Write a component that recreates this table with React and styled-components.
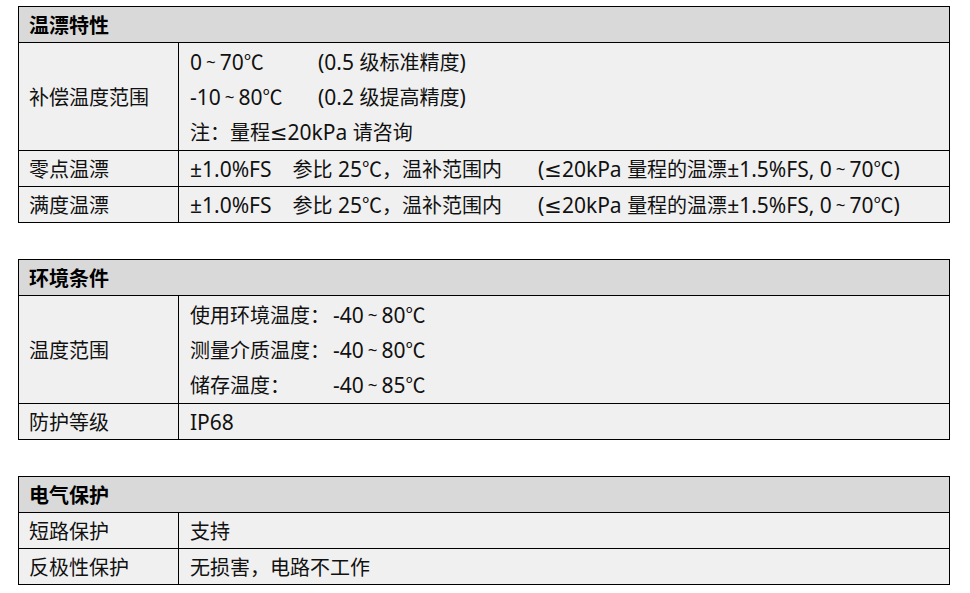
import React from "react";
import styled, { createGlobalStyle } from "styled-components";

const Global = createGlobalStyle`
  html, body { margin: 0; padding: 0; background: #ffffff; }
  body {
    font-family: "Noto Sans", "DejaVu Sans", "Noto Sans CJK SC", sans-serif;
    color: #111111;
  }
`;

const Page = styled.div`
  display: flex;
  flex-direction: column;
  gap: 36px;
  padding: 6px 0 0 18px;
`;

const Table = styled.section`
  width: 932px;
  box-sizing: border-box;
  border: 1px solid #000;
  background: #f0f0f0;
  font-size: 21px;
`;

const Header = styled.div`
  height: 35px;
  line-height: 35px;
  padding: 0 10px;
  background: #d9d9d9;
  border-bottom: 1px solid #000;
  font-weight: 700;
  color: #000;
`;

const Row = styled.div`
  display: grid;
  grid-template-columns: 160px 1fr;
  & + & { border-top: 1px solid #000; }
`;

const Label = styled.div`
  display: flex;
  align-items: center;
  padding: 0 10px;
  border-right: 1px solid #000;
  line-height: 35px;
  white-space: nowrap;
`;

const Value = styled.div`
  display: flex;
  flex-direction: column;
  justify-content: center;
  padding: ${(p) => (p.$multi ? "1px 11px" : "0 11px")};
`;

const Line = styled.div`
  display: flex;
  align-items: center;
  height: 35px;
  white-space: pre;
`;

const Key = styled.span`
  display: inline-block;
  width: ${(p) => p.$w}px;
  flex: none;
`;

const Seg = styled.span`
  margin-left: ${(p) => p.$gap || 0}px;
`;

const Han = styled.span`
  font-family: "Noto Sans CJK SC", sans-serif;
  font-size: 20px;
`;

const Tilde = styled.span`
  display: inline-block;
  font-size: 17px;
  margin: 0 4px;
  vertical-align: 2px;
`;

function Text({ children }) {
  const parts = String(children).split(/([\u3000-\u9fff\uff00-\uff5d\uff5f-\uffef℃]+|～)/);
  return parts.map((p, i) => {
    if (!p) return null;
    if (p === "～") return <Tilde key={i}>~</Tilde>;
    if (/[\u3000-\u9fff\uff00-\uffef℃]/.test(p)) return <Han key={i}>{p}</Han>;
    return <React.Fragment key={i}>{p}</React.Fragment>;
  });
}

const sections = [
  {
    title: "温漂特性",
    rows: [
      {
        label: "补偿温度范围",
        lines: [
          { key: "0～70℃", val: "(0.5 级标准精度)", w: 128 },
          { key: "-10～80℃", val: "(0.2 级提高精度)", w: 128 },
          { segs: [["注：量程≤20kPa 请咨询", 0]] },
        ],
      },
      {
        label: "零点温漂",
        lines: [
          {
            segs: [
              ["±1.0%FS", 0],
              ["参比 25℃，温补范围内", 21],
              ["(≤20kPa 量程的温漂±1.5%FS, 0～70℃)", 36],
            ],
          },
        ],
      },
      {
        label: "满度温漂",
        lines: [
          {
            segs: [
              ["±1.0%FS", 0],
              ["参比 25℃，温补范围内", 21],
              ["(≤20kPa 量程的温漂±1.5%FS, 0～70℃)", 36],
            ],
          },
        ],
      },
    ],
  },
  {
    title: "环境条件",
    rows: [
      {
        label: "温度范围",
        lines: [
          { key: "使用环境温度：", val: "-40～80℃", w: 143 },
          { key: "测量介质温度：", val: "-40～80℃", w: 143 },
          { key: "储存温度：", val: "-40～85℃", w: 143 },
        ],
      },
      { label: "防护等级", lines: [{ segs: [["IP68", 0]] }] },
    ],
  },
  {
    title: "电气保护",
    rows: [
      { label: "短路保护", lines: [{ segs: [["支持", 0]] }] },
      { label: "反极性保护", lines: [{ segs: [["无损害，电路不工作", 0]] }] },
    ],
  },
];

function LineView({ line }) {
  if (line.key) {
    return (
      <Line>
        <Key $w={line.w}>
          <Text>{line.key}</Text>
        </Key>
        <span>
          <Text>{line.val}</Text>
        </span>
      </Line>
    );
  }
  return (
    <Line>
      {line.segs.map(([t, g], i) => (
        <Seg key={i} $gap={g}>
          <Text>{t}</Text>
        </Seg>
      ))}
    </Line>
  );
}

export default function App() {
  return (
    <>
      <Global />
      <Page>
        {sections.map((s) => (
          <Table key={s.title}>
            <Header>
              <Text>{s.title}</Text>
            </Header>
            {s.rows.map((r) => (
              <Row key={r.label}>
                <Label>
                  <Text>{r.label}</Text>
                </Label>
                <Value $multi={r.lines.length > 1}>
                  {r.lines.map((l, i) => (
                    <LineView key={i} line={l} />
                  ))}
                </Value>
              </Row>
            ))}
          </Table>
        ))}
      </Page>
    </>
  );
}
